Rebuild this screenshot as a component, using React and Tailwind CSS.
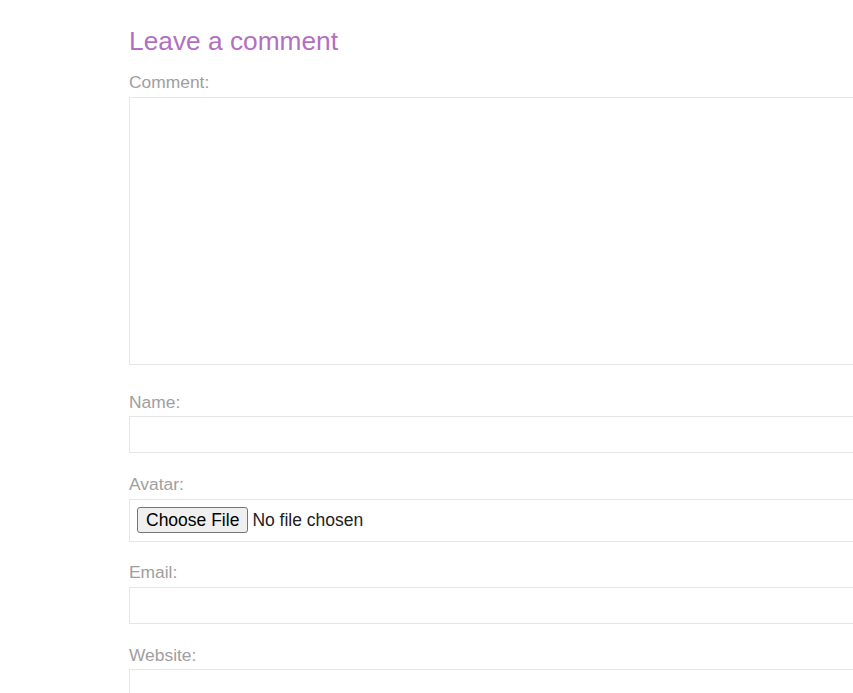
export default function App() {
  const label = "block text-[17.4px] leading-[20px] text-[#a09e9e]";
  const field = "block w-[760px] border border-[#e6e6e6] bg-white";
  return (
    <div className="h-screen w-full overflow-hidden bg-white font-['Liberation_Sans',Arial,sans-serif]">
      <form className="pl-[129px] pt-[26px]" onSubmit={(e) => e.preventDefault()}>
        <h3 className="text-[26.3px] leading-[31px] text-[#b36fc1]">Leave a comment</h3>
        <label className={`${label} mt-[15px]`} htmlFor="comment">
          Comment:
        </label>
        <textarea id="comment" className={`${field} mt-[5px] h-[268px] resize-none`} />

        <label className={`${label} mt-[27px]`} htmlFor="name">
          Name:
        </label>
        <input id="name" type="text" className={`${field} mt-[4px] h-[37px]`} />

        <label className={`${label} mt-[21px]`} htmlFor="avatar">
          Avatar:
        </label>
        <input
          id="avatar"
          type="file"
          className={`${field} mt-[5px] h-[43px] px-[7px] py-[7px] text-[17.5px] leading-[20px] text-[#222] file:mr-[4px] file:rounded-[3px] file:border file:border-solid file:border-[#767676] file:bg-[#efefef] file:px-[8px] file:py-[2px] file:text-[17.5px] file:leading-[20px] file:text-black`}
        />

        <label className={`${label} mt-[20px]`} htmlFor="email">
          Email:
        </label>
        <input id="email" type="email" className={`${field} mt-[5px] h-[37px]`} />

        <label className={`${label} mt-[21px]`} htmlFor="website">
          Website:
        </label>
        <input id="website" type="text" className={`${field} mt-[4px] h-[37px]`} />
      </form>
    </div>
  );
}
